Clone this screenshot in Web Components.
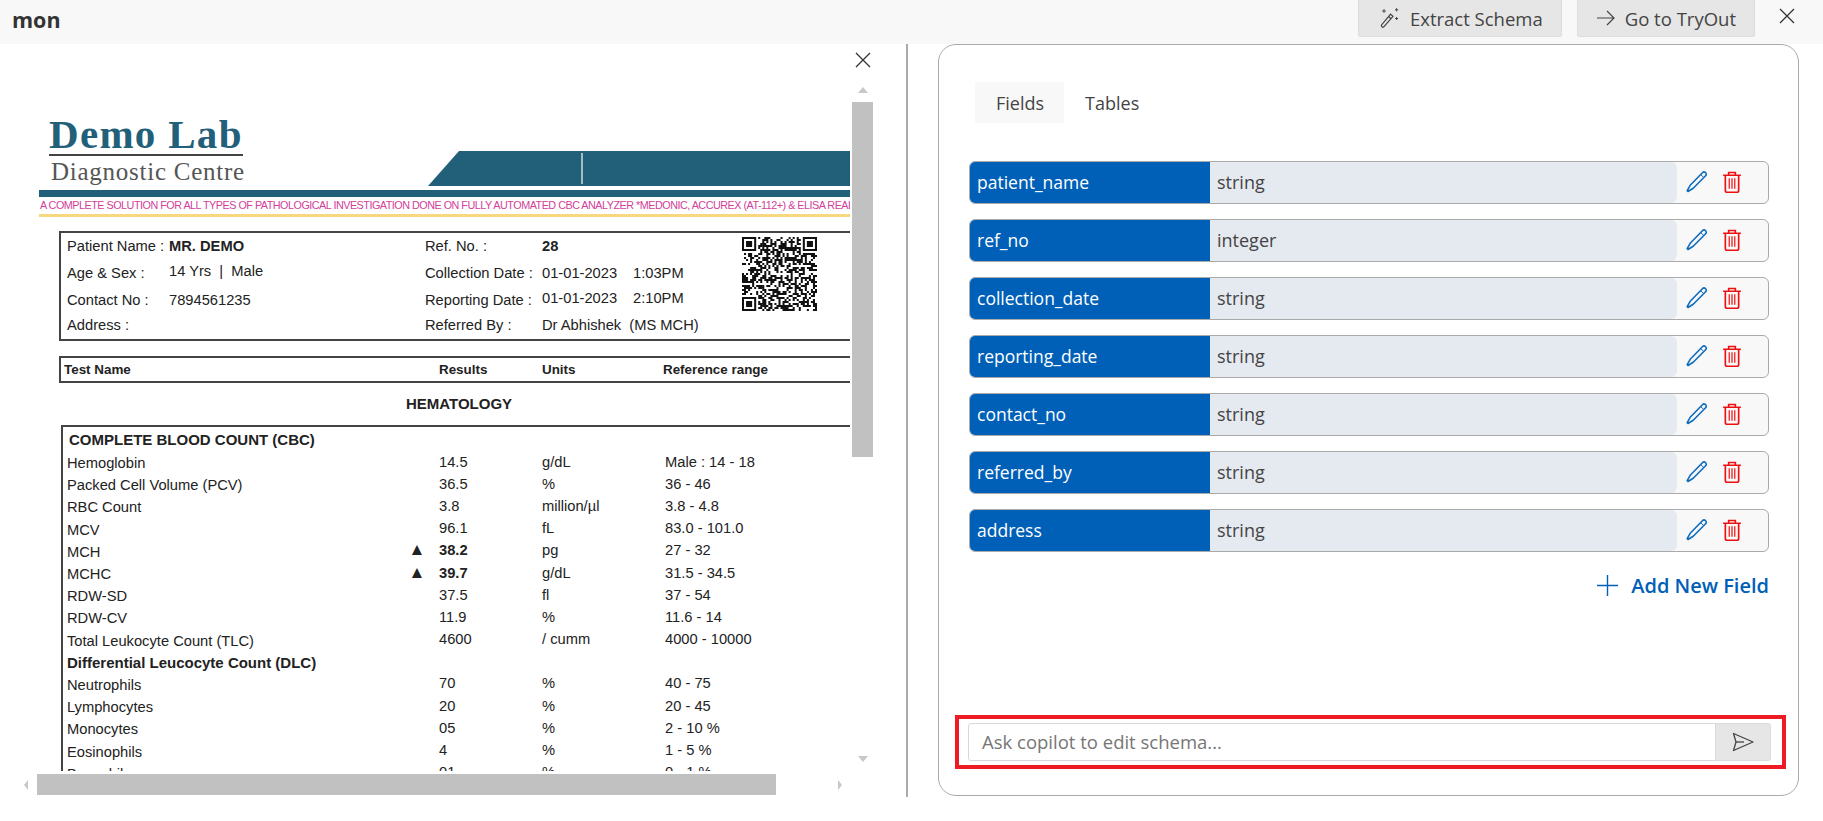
<!DOCTYPE html>
<html>
<head>
<meta charset="utf-8">
<title>mon</title>
<style>
	html, body { margin: 0; padding: 0; background: #fff; overflow: hidden; }
	body { width: 1823px; height: 821px; font-family: "Open Sans", "Noto Sans", sans-serif; }
</style>
</head>
<body>
<schema-app></schema-app>

<script>
class UiButton extends HTMLElement {
	constructor() {
		super();
		this.shadow = this.attachShadow({ mode: 'open' });
	}

	connectedCallback() {
		this.shadow.innerHTML = `
		<style>
			:host {
				display: flex;
				align-items: center;
				gap: 9px;
				box-sizing: border-box;
				height: 37px;
				padding: 0 18px;
				background: #e6e6e6;
				border: 1px solid #dcdcdc;
				border-top: 0;
				border-radius: 0 0 3px 3px;
				color: #444;
				font-size: 18.5px;
				white-space: nowrap;
			}
			::slotted(svg) { flex: none; }
		</style>
		<slot name="icon"></slot><slot></slot>
		`;
	}
}
customElements.define('ui-button', UiButton);


class AppBar extends HTMLElement {
	constructor() {
		super();
		this.shadow = this.attachShadow({ mode: 'open' });
	}

	connectedCallback() {
		this.shadow.innerHTML = `
		<style>
			:host {
				display: flex;
				align-items: flex-start;
				box-sizing: border-box;
				height: 44px;
				background: #f8f8f8;
			}
			.title {
				margin: 6px auto 0 12px;
				font-size: 21.5px;
				line-height: 28px;
				font-weight: 700;
				color: #333;
			}
			ui-button + ui-button { margin-left: 15px; }
			.close { margin: 8px 28px 0 24px; display: block; }
		</style>
		<div class="title">mon</div>
		<ui-button>
			<svg slot="icon" width="24" height="24" viewBox="0 0 24 24" fill="none" stroke="#444" stroke-width="1.2">
				<path d="M13.6 8.2 16 10.4 7 20.6c-.6.7-1.5.7-2.1.2s-.7-1.4-.1-2.1z"/>
				<path d="M11.6 10.5 14 12.7"/>
				<path d="M7 3.2v3.6M5.2 5h3.6M19.6 2.2v3.2M18 3.8h3.2M19.6 11v3M18.1 12.500h3" stroke-width="1"/>
			</svg>
			Extract Schema
		</ui-button>
		<ui-button>
			<svg slot="icon" width="20" height="20" viewBox="0 0 20 20" fill="none" stroke="#444" stroke-width="1.2">
				<path d="M1 10h17M11 3l7 7-7 7"/>
			</svg>
			Go to TryOut
		</ui-button>
		<svg class="close" width="16" height="16" viewBox="0 0 16 16" stroke="#333" stroke-width="1.3"><path d="M1 1l14 14M15 1 1 15"/></svg>
		`;
	}
}
customElements.define('app-bar', AppBar);


class QrCode extends HTMLElement {
	constructor() {
		super();
		this.shadow = this.attachShadow({ mode: 'open' });
	}

	connectedCallback() {
		const size = 37;
		let d = '';
		let seed = 7;
		const finder = (x, y) => x >= 0 && y >= 0 && x < 8 && y < 8;
		for (let y = 0; y < size; y++) {
			for (let x = 0; x < size; x++) {
				seed = (seed * 1103515245 + 12345) & 0x7fffffff;
				if (finder(x, y) || finder(size - 1 - x, y) || finder(x, size - 1 - y)) continue;
				if ((seed >> 16) % 100 < 52) d += `M${x} ${y}h1v1h-1z`;
			}
		}
		const eye = (x, y) => `M${x} ${y}h7v7h-7zM${x + 1} ${y + 1}v5h5v-5zM${x + 2} ${y + 2}h3v3h-3z`;
		d += eye(0, 0) + eye(size - 7, 0) + eye(0, size - 7);
		this.shadow.innerHTML = `
		<style>
			:host { display: block; width: 75px; height: 74px; }
			svg { display: block; }
		</style>
		<svg width="75" height="74" viewBox="0 0 ${size} ${size}" preserveAspectRatio="none"><path fill="#111" fill-rule="evenodd" d="${d}"/></svg>
		`;
	}
}
customElements.define('qr-code', QrCode);


class DocPage extends HTMLElement {
	constructor() {
		super();
		this.shadow = this.attachShadow({ mode: 'open' });
	}

	connectedCallback() {
		const results = [
			['Hemoglobin', '', '14.5', 'g/dL', 'Male : 14 - 18'],
			['Packed Cell Volume (PCV)', '', '36.5', '%', '36 - 46'],
			['RBC Count', '', '3.8', 'million/µl', '3.8 - 4.8'],
			['MCV', '', '96.1', 'fL', '83.0 - 101.0'],
			['MCH', '▲', '38.2', 'pg', '27 - 32'],
			['MCHC', '▲', '39.7', 'g/dL', '31.5 - 34.5'],
			['RDW-SD', '', '37.5', 'fl', '37 - 54'],
			['RDW-CV', '', '11.9', '%', '11.6 - 14'],
			['Total Leukocyte Count (TLC)', '', '4600', '/ cumm', '4000 - 10000'],
			['Differential Leucocyte Count (DLC)'],
			['Neutrophils', '', '70', '%', '40 - 75'],
			['Lymphocytes', '', '20', '%', '20 - 45'],
			['Monocytes', '', '05', '%', '2 - 10 %'],
			['Eosinophils', '', '4', '%', '1 - 5 %'],
			['Basophils', '', '01', '%', '0 - 1 %']
		];
		const rows = results.map((r) => {
			if (r.length === 1) return `<div class="row"><b class="wide">${r[0]}</b></div>`;
			return `<div class="row">
				<span>${r[0]}</span><span class="flag">${r[1]}</span>
				<span class="up">${r[1] ? `<b>${r[2]}</b>` : r[2]}</span><span class="up">${r[3]}</span><span class="up">${r[4]}</span>
			</div>`;
		}).join('');

		this.shadow.innerHTML = `
		<style>
			:host {
				display: block;
				width: 1000px;
				font-family: "Liberation Sans", Arial, sans-serif;
				font-size: 14.7px;
				color: #222;
				background: #fff;
			}
			.head { display: flex; align-items: flex-end; height: 68px; padding: 38px 0 0 12px; }
			.logo { width: 379px; flex: none; height: 68px; }
			.lab {
				font-family: "Liberation Serif", serif;
				font-weight: 700;
				font-size: 41px;
				line-height: 28px;
				color: #22607a;
				width: 194px;
				height: 34px;
				border-bottom: 2px solid #444;
				white-space: nowrap;
				letter-spacing: 1.3px;
			}
			.centre {
				font-family: "Liberation Serif", serif;
				font-size: 25px;
				line-height: 32px;
				color: #555;
				margin-left: 2px;
				white-space: nowrap;
				letter-spacing: .75px;
			}
			.banner { display: block; margin-bottom: 2px; flex: none; }
			.strip { height: 7px; margin: 2px 0 0 2px; background: #22607a; }
			.tag {
				height: 17px;
				line-height: 17px;
				margin-left: 3px;
				font-size: 10.8px;
				letter-spacing: -.5px;
				color: #d2409a;
				white-space: nowrap;
			}
			.gold { height: 3px; margin-left: 2px; background: #f7d87e; }

			.info {
				box-sizing: border-box;
				height: 110px;
				margin: 14px 0 0 22px;
				padding-left: 6px;
				border: 2px solid #444;
				display: grid;
				grid-template-columns: 102px 256px 117px 200px 75px;
				grid-template-rows: 26px 27px 27px 24px;
				align-items: center;
			}
			.time { display: inline-block; width: 91px; }
			.lift { padding-bottom: 4px; }
			qr-code { grid-column: 5; grid-row: 1 / 4; align-self: start; margin-top: 4px; }

			.cols {
				box-sizing: border-box;
				height: 27px;
				margin: 15px 0 0 22px;
				padding-left: 3px;
				border: 2px solid #444;
				border-left-width: 2px;
				display: grid;
				grid-template-columns: 375px 103px 121px 1fr;
				align-items: center;
				font-size: 13.4px;
				font-weight: 700;
			}
			.section { width: 844px; height: 42px; line-height: 41px; text-align: center; font-size: 15px; font-weight: 700; }
			.results {
				margin-left: 24px;
				padding: 0 0 20px 4px;
				border: 2px solid #444;
			}
			.cbc { height: 25px; line-height: 26px; padding-left: 2px; font-size: 15px; font-weight: 700; }
			.row {
				display: grid;
				grid-template-columns: 336px 36px 103px 123px 1fr;
				height: 22.200px;
				align-items: center;
				white-space: nowrap;
			}
			.up { padding-bottom: 3px; }
			.wide { grid-column: 1 / -1; font-size: 15px; }
			.flag { text-align: center; font-size: 17px; line-height: 18px; padding: 0 8px 3px 0; }
		</style>
		<div class="head">
			<div class="logo">
				<div class="lab">Demo Lab</div>
				<div class="centre">Diagnostic Centre</div>
			</div>
			<svg class="banner" width="609" height="35" viewBox="0 0 609 35">
				<path d="M31 0H609V35H0z" fill="#22607a"/>
				<path d="M154 2v31" stroke="#cfdde3" stroke-width="1.500"/>
			</svg>
		</div>
		<div class="strip"></div>
		<div class="tag">A COMPLETE SOLUTION FOR ALL TYPES OF PATHOLOGICAL INVESTIGATION DONE ON FULLY AUTOMATED CBC ANALYZER *MEDONIC, ACCUREX (AT-112+) &amp; ELISA READER</div>
		<div class="gold"></div>

		<div class="info">
			<span>Patient Name :</span><b>MR. DEMO</b><span>Ref. No. :</span><b>28</b>
			<qr-code></qr-code>
			<span>Age &amp; Sex :</span><span class="lift">14 Yrs &nbsp;|&nbsp; Male</span><span>Collection Date :</span><span><span class="time">01-01-2023</span>1:03PM</span>
			<span>Contact No :</span><span>7894561235</span><span>Reporting Date :</span><span class="lift"><span class="time">01-01-2023</span>2:10PM</span>
			<span>Address :</span><span></span><span>Referred By :</span><span>Dr Abhishek &nbsp;(MS MCH)</span>
		</div>

		<div class="cols"><span>Test Name</span><span>Results</span><span>Units</span><span>Reference range</span></div>
		<div class="section">HEMATOLOGY</div>
		<div class="results">
			<div class="cbc">COMPLETE BLOOD COUNT (CBC)</div>
			${rows}
		</div>
		`;
	}
}
customElements.define('doc-page', DocPage);


class DocViewer extends HTMLElement {
	constructor() {
		super();
		this.shadow = this.attachShadow({ mode: 'open' });
	}

	connectedCallback() {
		this.shadow.innerHTML = `
		<style>
			:host {
				display: grid;
				box-sizing: border-box;
				width: 906px;
				height: 753px;
				grid-template-columns: 37px 813px 2px 21px;
				grid-template-rows: 38px 689px 3px 21px;
			}
			.close { grid-column: 4; grid-row: 1; justify-self: center; margin-top: 8px; display: block; }
			.page { grid-column: 2; grid-row: 2; overflow: hidden; }
			.vbar { grid-column: 4; grid-row: 2; display: flex; flex-direction: column; align-items: center; }
			.thumb { background: #c1c1c1; }
			.vbar .thumb { width: 21px; height: 355px; }
			.up, .down { width: 0; height: 0; border-left: 5px solid transparent; border-right: 5px solid transparent; }
			.up { border-bottom: 6px solid #c8c8c8; margin: 5px 0 9px; }
			.down { border-top: 6px solid #c8c8c8; margin: auto 0 9px; }
			.left-arrow { grid-column: 1; grid-row: 4; justify-self: end; align-self: center; margin-right: 9px;
				width: 0; height: 0; border-top: 5px solid transparent; border-bottom: 5px solid transparent; border-right: 4px solid #c8c8c8; }
			.hbar { grid-column: 2; grid-row: 4; display: flex; align-items: center; }
			.hbar .thumb { width: 739px; height: 21px; }
			.right-arrow { margin-left: auto; margin-right: 8px;
				width: 0; height: 0; border-top: 5px solid transparent; border-bottom: 5px solid transparent; border-left: 4px solid #c8c8c8; }
		</style>
		<svg class="close" width="16" height="16" viewBox="0 0 16 16" stroke="#333" stroke-width="1.300"><path d="M1 1l14 14M15 1 1 15"/></svg>
		<div class="page"><slot></slot></div>
		<div class="vbar"><div class="up"></div><div class="thumb"></div><div class="down"></div></div>
		<div class="left-arrow"></div>
		<div class="hbar"><div class="thumb"></div><div class="right-arrow"></div></div>
		`;
	}
}
customElements.define('doc-viewer', DocViewer);


class FieldRow extends HTMLElement {
	constructor() {
		super();
		this.shadow = this.attachShadow({ mode: 'open' });
	}

	connectedCallback() {
		this.shadow.innerHTML = `
		<style>
			:host {
				display: flex;
				box-sizing: border-box;
				height: 43px;
				border: 1px solid #aaa;
				border-radius: 6px;
				background: #f8f8f8;
				overflow: hidden;
				font-size: 18px;
			}
			.name {
				box-sizing: border-box;
				width: 240px;
				padding-left: 7px;
				background: #0060b8;
				color: #fff;
				font-size: 17.5px;
				line-height: 41px;
			}
			.type {
				box-sizing: border-box;
				width: 467px;
				padding-left: 7px;
				background: #e5eaf1;
				border-radius: 0 6px 6px 0;
				color: #444;
				line-height: 41px;
			}
			.actions { display: flex; align-items: center; gap: 14px; padding: 0 0 2px 9px; }
			svg { display: block; }
		</style>
		<div class="name">${this.getAttribute('name')}</div>
		<div class="type">${this.getAttribute('type')}</div>
		<div class="actions">
			<svg width="22" height="22" viewBox="0 0 22 22" fill="none" stroke="#0f6cbd" stroke-width="1.600" stroke-linejoin="round">
				<path d="M16.400 1.700c.9-.9 2.300-.9 3.200 0s.9 2.200 0 3.100L7.200 17.300 2 20.500l-.8-.8 3-5.400z"/>
				<path d="M14.600 3.500 17.800 6.600" stroke-width="1"/>
			</svg>
			<svg width="20" height="22" viewBox="0 0 18 21" preserveAspectRatio="none" fill="none" stroke="#ee1111" stroke-width="1.500">
				<path d="M1 4h16M6 4V1.500h6V4"/>
				<path d="M3 4v14.500c0 1 .6 1.700 1.600 1.700h8.800c1 0 1.600-.7 1.600-1.700V4"/>
				<path d="M6.500 7v10M9 7v10M11.500 7v10" stroke-width="1.100"/>
			</svg>
		</div>
		`;
	}
}
customElements.define('field-row', FieldRow);


class ChatBox extends HTMLElement {
	constructor() {
		super();
		this.shadow = this.attachShadow({ mode: 'open' });
	}

	connectedCallback() {
		this.shadow.innerHTML = `
		<style>
			:host {
				display: flex;
				box-sizing: border-box;
				height: 54px;
				margin: auto -17px 0 -14px;
				padding: 4px 11px 4px 9px;
				border: 4px solid #ed1c24;
			}
			.input {
				flex: 1;
				box-sizing: border-box;
				height: 38px;
				padding-left: 13px;
				border: 1px solid #d8d8d8;
				border-radius: 3px 0 0 3px;
				color: #767676;
				font-size: 18.5px;
				line-height: 35px;
			}
			.send {
				width: 55px;
				height: 38px;
				box-sizing: border-box;
				background: #e6e6e6;
				border: 1px solid #dcdcdc;
				border-left: 0;
				border-radius: 0 3px 3px 0;
				display: flex;
				align-items: center;
				justify-content: center;
			}
			svg { display: block; }
		</style>
		<div class="input">Ask copilot to edit schema...</div>
		<div class="send">
			<svg width="24" height="20" viewBox="0 0 24 20" fill="none" stroke="#444" stroke-width="1.300" stroke-linejoin="round">
				<path d="M2.500 1.500 22 10 2.500 18.500 5 10z"/><path d="M5 10h8"/>
			</svg>
		</div>
		`;
	}
}
customElements.define('chat-box', ChatBox);


class SchemaPanel extends HTMLElement {
	constructor() {
		super();
		this.shadow = this.attachShadow({ mode: 'open' });
	}

	connectedCallback() {
		const fields = [
			['patient_name', 'string'],
			['ref_no', 'integer'],
			['collection_date', 'string'],
			['reporting_date', 'string'],
			['contact_no', 'string'],
			['referred_by', 'string'],
			['address', 'string']
		];
		this.shadow.innerHTML = `
		<style>
			:host {
				display: flex;
				flex-direction: column;
				box-sizing: border-box;
				width: 861px;
				height: 752px;
				padding: 37px 29px 26px 30px;
				border: 1px solid #aaa;
				border-radius: 18px;
				background: #fff;
			}
			.tabs { display: flex; margin-left: 6px; height: 41px; font-size: 18px; color: #444; line-height: 43px; }
			.tab { padding: 0 20px 0 21px; }
			.tab.active { background: #f8f8f8; }
			.list { display: flex; flex-direction: column; gap: 15px; margin-top: 38px; }
			.add {
				display: flex;
				align-items: center;
				justify-content: flex-end;
				gap: 13px;
				height: 24px;
				margin-top: 21px;
				color: #0060b8;
				font-size: 20px;
				font-weight: 600;
			}
			svg { display: block; }
		</style>
		<div class="tabs"><div class="tab active">Fields</div><div class="tab">Tables</div></div>
		<div class="list">
			${fields.map((f) => `<field-row name="${f[0]}" type="${f[1]}"></field-row>`).join('')}
		</div>
		<div class="add">
			<svg width="21" height="21" viewBox="0 0 21 21" stroke="#0060b8" stroke-width="1.400"><path d="M10.500 0v21M0 10.500h21"/></svg>
			Add New Field
		</div>
		<chat-box></chat-box>
		`;
	}
}
customElements.define('schema-panel', SchemaPanel);


class SchemaApp extends HTMLElement {
	constructor() {
		super();
		this.shadow = this.attachShadow({ mode: 'open' });
	}

	connectedCallback() {
		this.shadow.innerHTML = `
		<style>
			:host { display: block; width: 1823px; height: 821px; }
			.main { display: flex; align-items: flex-start; }
			.rule { width: 2px; height: 753px; background: #aaa; flex: none; }
			schema-panel { margin-left: 30px; }
		</style>
		<app-bar></app-bar>
		<div class="main">
			<doc-viewer><doc-page></doc-page></doc-viewer>
			<div class="rule"></div>
			<schema-panel></schema-panel>
		</div>
		`;
	}
}
customElements.define('schema-app', SchemaApp);
</script>
</body>
</html>
